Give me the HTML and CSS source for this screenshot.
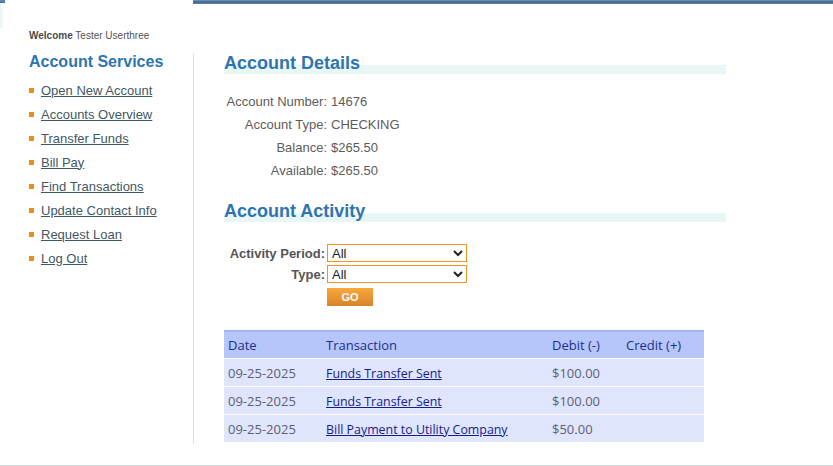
FILE: index.html
```html
<!DOCTYPE html>
<html>
<head>
<meta charset="utf-8">
<link rel="stylesheet" href="styles.css">
</head>
<body>
<div class="topbar">
  <div class="bar-left"></div>
  <div class="bar-gap"></div>
  <div class="bar-right"></div>
</div>
<div class="page">
  <aside class="left">
    <p class="welcome"><b>Welcome</b> Tester Userthree</p>
    <h2 class="services">Account Services</h2>
    <ul class="menu">
      <li><a href="#">Open New Account</a></li>
      <li><a href="#">Accounts Overview</a></li>
      <li><a href="#">Transfer Funds</a></li>
      <li><a href="#">Bill Pay</a></li>
      <li><a href="#">Find Transactions</a></li>
      <li><a href="#">Update Contact Info</a></li>
      <li><a href="#">Request Loan</a></li>
      <li><a href="#">Log Out</a></li>
    </ul>
  </aside>
  <main class="main">
    <h1 class="title">Account Details</h1>
    <div class="details">
      <span class="lbl">Account Number:</span><span>14676</span>
      <span class="lbl">Account Type:</span><span>CHECKING</span>
      <span class="lbl">Balance:</span><span>$265.50</span>
      <span class="lbl">Available:</span><span>$265.50</span>
    </div>
    <h1 class="title title2">Account Activity</h1>
    <form class="filter">
      <label class="flbl">Activity Period:</label>
      <select class="sel"><option>All</option></select>
      <label class="flbl">Type:</label>
      <select class="sel"><option>All</option></select>
      <span></span>
      <button type="button" class="go">GO</button>
    </form>
    <table class="tx">
      <thead>
        <tr><th class="c1">Date</th><th class="c2">Transaction</th><th class="c3">Debit (-)</th><th class="c4">Credit (+)</th></tr>
      </thead>
      <tbody>
        <tr><td>09-25-2025</td><td><a href="#">Funds Transfer Sent</a></td><td>$100.00</td><td></td></tr>
        <tr><td>09-25-2025</td><td><a href="#">Funds Transfer Sent</a></td><td>$100.00</td><td></td></tr>
        <tr><td>09-25-2025</td><td><a href="#">Bill Payment to Utility Company</a></td><td>$50.00</td><td></td></tr>
      </tbody>
    </table>
  </main>
</div>
<div class="footer"></div>
</body>
</html>
```
FILE: styles.css
```css
html, body {
  margin: 0;
  padding: 0;
  background: #ffffff;
  font-family: "Liberation Sans", Arial, sans-serif;
  color: #5a5a5a;
  width: 833px;
  height: 466px;
  overflow: hidden;
}

.topbar {
  display: flex;
  height: 4px;
}
.bar-left {
  width: 5px;
  height: 3px;
  background: linear-gradient(#6f90b2, #3e6a96);
}
.bar-gap {
  width: 188px;
  background: #fff;
}
.bar-right {
  flex: 1;
  background: linear-gradient(#7696b6 0%, #4a729b 40%, #3f6890 70%, #6d8fb1 100%);
}

.page {
  display: flex;
  height: 440px;
  background: linear-gradient(to right, #e9f4f5 0, #ffffff 5px) no-repeat 0 0 / 5px 24px;
}

.left {
  width: 193px;
  box-sizing: border-box;
  padding: 26px 0 0 29px;
}
.welcome {
  margin: 0;
  font-size: 10px;
  line-height: 12px;
  color: #555;
}
.welcome b {
  color: #4a4a4a;
}
.services {
  margin: 10px 0 0;
  font-size: 16px;
  line-height: 20px;
  font-weight: bold;
  color: #2e74b0;
}
.menu {
  list-style: none;
  margin: 6px 0 0;
  padding: 0;
}
.menu li {
  display: flex;
  align-items: center;
  height: 24px;
  font-size: 13px;
}
.menu li::before {
  content: "";
  width: 5px;
  height: 5px;
  background: #e8901f;
  margin-right: 7px;
}
.menu a {
  color: #3f5865;
  text-decoration: underline;
}

.main {
  margin-top: 49px;
  border-left: 1px solid #d4e6e6;
  padding-left: 30px;
  height: 391px;
  width: 502px;
}

.title {
  margin: 0;
  height: 21px;
  font-size: 18px;
  line-height: 21px;
  font-weight: bold;
  color: #2e74b0;
  background: linear-gradient(to bottom, transparent 12px, #e8f6f6 12px);
}
.title2 {
  margin-top: 19px;
}

.details {
  display: grid;
  grid-template-columns: 103px auto;
  column-gap: 4px;
  margin-top: 16px;
  font-size: 13px;
  line-height: 23px;
  color: #5c5c5c;
}
.lbl {
  text-align: right;
}

.filter {
  display: grid;
  grid-template-columns: 101px 140px;
  column-gap: 2px;
  row-gap: 3px;
  margin: 22px 0 0;
  align-items: center;
}
.flbl {
  text-align: right;
  font-size: 13px;
  font-weight: bold;
  color: #555;
}
.sel {
  height: 18px;
  width: 140px;
  box-sizing: border-box;
  border: 1px solid #ef9424;
  border-radius: 0;
  font-family: "Liberation Sans", Arial, sans-serif;
  font-size: 13px;
  color: #222;
  background: #fff;
  padding: 0;
}
.go {
  width: 46px;
  height: 18px;
  margin-top: 2px;
  border: none;
  padding: 0;
  background: linear-gradient(#f9a73c, #d8842a);
  color: #ffffff;
  font-family: "Liberation Sans", Arial, sans-serif;
  font-size: 11px;
  font-weight: bold;
}

.tx {
  margin-top: 24px;
  width: 480px;
  border-collapse: separate;
  border-spacing: 0;
  font-family: "Open Sans", sans-serif;
  font-size: 13px;
}
.tx th {
  height: 26px;
  padding: 0 0 0 4px;
  text-align: left;
  font-weight: normal;
  color: #1d2f8c;
  background: #b6c6fa;
  border-top: 2px solid #a4b6f6;
}
.tx td {
  height: 27px;
  padding: 0 0 0 4px;
  background: #dfe5fc;
  border-top: 1px solid #ffffff;
  color: #5e5e72;
}
.tx .c1 { width: 94px; }
.tx .c2 { width: 222px; }
.tx .c3 { width: 70px; }
.tx a {
  font-size: 12.4px;
  color: #161c8c;
  text-decoration: underline;
}

.footer {
  border-top: 1px solid #d3dade;
  margin-top: 21px;
}
```
